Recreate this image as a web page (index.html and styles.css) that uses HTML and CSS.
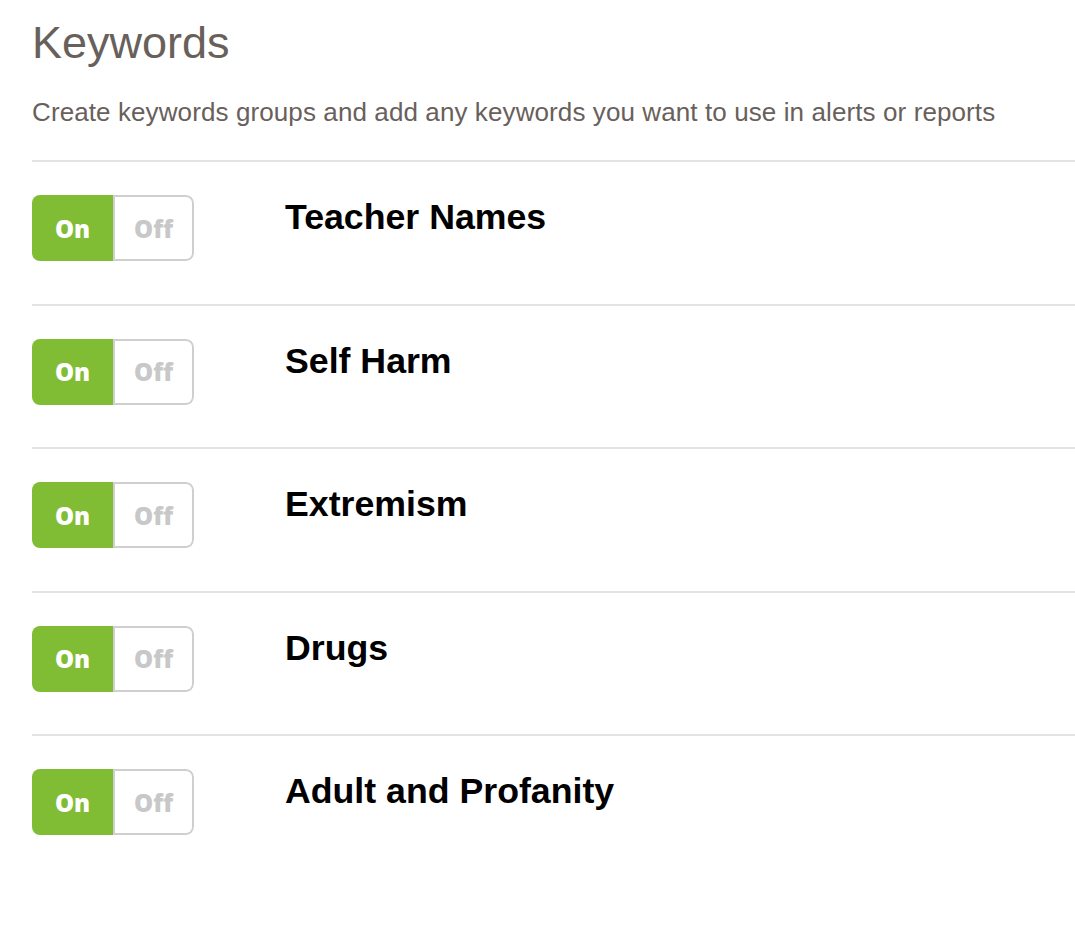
FILE: index.html
```html
<!DOCTYPE html>
<html lang="en">
<head>
<meta charset="utf-8">
<title>Keywords</title>
<link rel="stylesheet" href="styles.css">
</head>
<body>
<main class="page">
  <h1 class="title">Keywords</h1>
  <p class="subtitle">Create keywords groups and add any keywords you want to use in alerts or reports</p>
  <ul class="groups">
    <li class="group">
      <div class="toggle"><span class="toggle-on">On</span><span class="toggle-off">Off</span></div>
      <h2 class="group-name">Teacher Names</h2>
    </li>
    <li class="group">
      <div class="toggle"><span class="toggle-on">On</span><span class="toggle-off">Off</span></div>
      <h2 class="group-name">Self Harm</h2>
    </li>
    <li class="group">
      <div class="toggle"><span class="toggle-on">On</span><span class="toggle-off">Off</span></div>
      <h2 class="group-name">Extremism</h2>
    </li>
    <li class="group">
      <div class="toggle"><span class="toggle-on">On</span><span class="toggle-off">Off</span></div>
      <h2 class="group-name">Drugs</h2>
    </li>
    <li class="group">
      <div class="toggle"><span class="toggle-on">On</span><span class="toggle-off">Off</span></div>
      <h2 class="group-name">Adult and Profanity</h2>
    </li>
  </ul>
</main>
</body>
</html>
```

FILE: styles.css
```css
html, body {
  margin: 0;
  padding: 0;
  background: #fff;
}

body {
  font-family: "Liberation Sans", Arial, sans-serif;
}

.page {
  padding: 0 0 0 32px;
}

.title {
  margin: 0;
  padding-top: 16px;
  font-size: 45px;
  font-weight: 400;
  line-height: 54px;
  color: #68605b;
}

.subtitle {
  margin: 27px 0 0;
  font-size: 26px;
  letter-spacing: 0.1px;
  line-height: 30px;
  color: #68605b;
}

.groups {
  list-style: none;
  margin: 33px 0 0;
  padding: 0;
}

.group {
  display: flex;
  align-items: flex-start;
  gap: 91px;
  height: 141.5px;
  border-top: 2px solid #e3e3e3;
}

.toggle {
  display: flex;
  margin-top: 33px;
  width: 162px;
  height: 66px;
  box-sizing: border-box;
  border-radius: 8px;
  overflow: hidden;
  font-family: "Open Sans", "Liberation Sans", sans-serif;
  font-weight: 800;
  font-size: 24px;
}

.toggle-on {
  flex: 0 0 81px;
  display: flex;
  align-items: center;
  justify-content: center;
  background: #80bd34;
  color: #fff;
  border-right: 2px solid #cfcfcf;
}

.toggle-off {
  flex: 1;
  display: flex;
  align-items: center;
  justify-content: center;
  color: #c8c8c8;
  border: 2px solid #cfcfcf;
  border-left: 0;
  border-radius: 0 8px 8px 0;
}

.group-name {
  margin: 35px 0 0;
  font-size: 35.7px;
  font-weight: 700;
  line-height: 40px;
  color: #000;
}
```
